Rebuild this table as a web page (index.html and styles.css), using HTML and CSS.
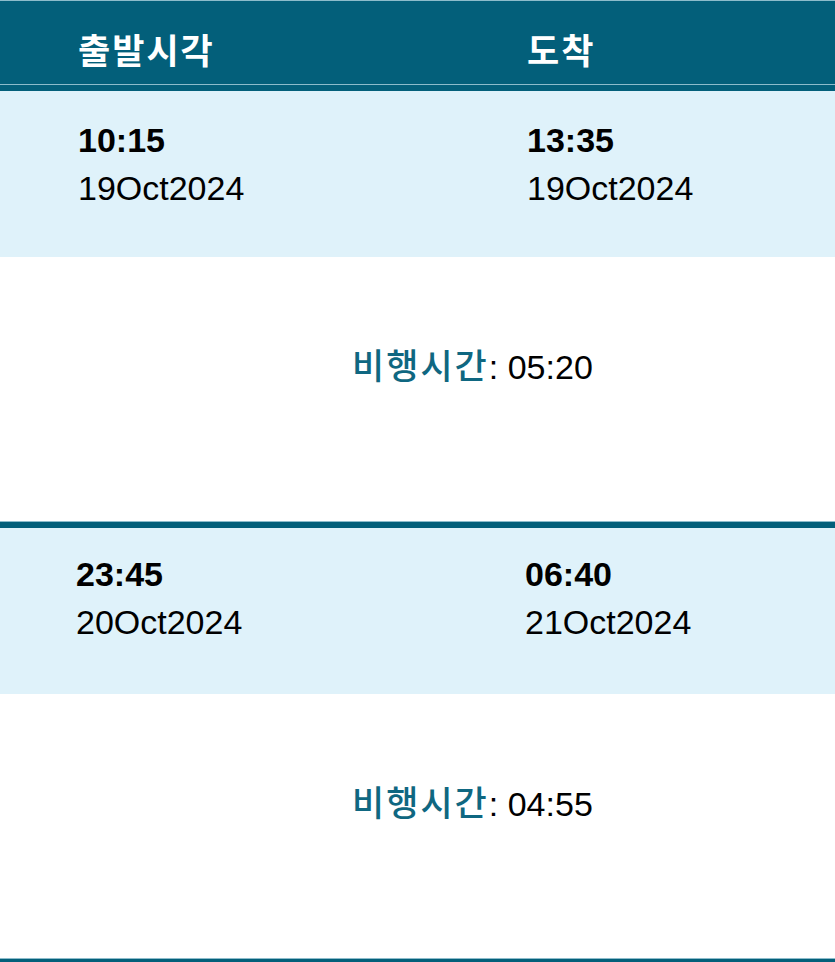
FILE: index.html
```html
<!DOCTYPE html>
<html lang="ko">
<head>
<meta charset="utf-8">
<link rel="stylesheet" href="styles.css">
</head>
<body>
<div class="table">
  <div class="head">
    <div class="head-cell">출발시각</div>
    <div class="head-cell">도착</div>
  </div>
  <div class="sep"></div>

  <div class="times">
    <div class="cell"><div class="time">10:15</div><div class="date">19Oct2024</div></div>
    <div class="cell"><div class="time">13:35</div><div class="date">19Oct2024</div></div>
  </div>
  <div class="duration"><span class="label">비행시간</span>: 05:20</div>
  <div class="sep"></div>

  <div class="times second">
    <div class="cell"><div class="time">23:45</div><div class="date">20Oct2024</div></div>
    <div class="cell"><div class="time">06:40</div><div class="date">21Oct2024</div></div>
  </div>
  <div class="duration"><span class="label">비행시간</span>: 04:55</div>
  <div class="sep"></div>
</div>
</body>
</html>
```

FILE: styles.css
```css
html, body {
  margin: 0;
  padding: 0;
  background: #ffffff;
}
body {
  font-family: "Liberation Sans", Arial, "Noto Sans CJK KR", sans-serif;
  font-size: 34px;
  color: #000;
}
.table {
  width: 835px;
}
.head {
  border-top: 1px solid #8dbccb;
  background: #035f7a;
  height: 84px;
  box-sizing: border-box;
  display: grid;
  grid-template-columns: 449px 1fr;
  padding-left: 78px;
  padding-top: 12px;
  align-items: center;
}
.head-cell {
  font-family: "Noto Sans CJK KR", sans-serif;
  font-weight: 700;
  font-size: 35px;
  letter-spacing: 2px;
  color: #ffffff;
  line-height: 40px;
}
.sep {
  height: 6px;
  border-top: 1px solid #8dbccb;
  background: #035f7a;
}
.times {
  background: #dff2fa;
  height: 166px;
  box-sizing: border-box;
  display: grid;
  grid-template-columns: 449px 1fr;
  padding-left: 78px;
  padding-top: 25px;
}
.times.second {
  padding-top: 22px;
  padding-left: 76px;
}
.cell {
  line-height: 48px;
}
.time {
  font-weight: 700;
}
.date {
  font-weight: 400;
}
.duration {
  height: 264px;
  box-sizing: border-box;
  padding-left: 352px;
  padding-top: 83px;
  line-height: 48px;
}
.label {
  font-family: "Noto Sans CJK KR", sans-serif;
  font-weight: 500;
  font-size: 35px;
  letter-spacing: 2px;
  color: #0f6781;
}
```
